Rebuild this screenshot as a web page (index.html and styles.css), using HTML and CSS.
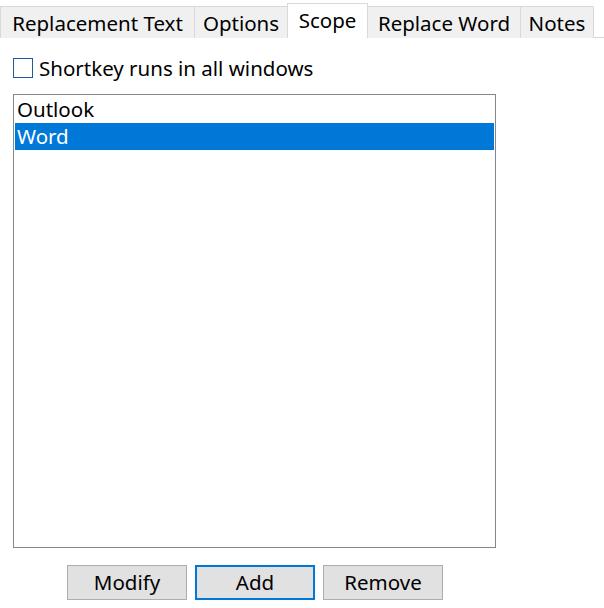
FILE: index.html
```html
<!DOCTYPE html>
<html>
<head>
<meta charset="utf-8">
<link rel="stylesheet" href="styles.css">
</head>
<body>
<div class="dialog">
  <div class="tabs">
    <div class="tab t1">Replacement Text</div>
    <div class="tab t2">Options</div>
    <div class="tab t3 active">Scope</div>
    <div class="tab t4">Replace Word</div>
    <div class="tab t5">Notes</div>
  </div>
  <div class="panel">
    <label class="check">
      <span class="box"></span>
      <span class="check-label">Shortkey runs in all windows</span>
    </label>
    <div class="list">
      <div class="item">Outlook</div>
      <div class="item selected">Word</div>
    </div>
    <div class="buttons">
      <button class="btn">Modify</button>
      <button class="btn default">Add</button>
      <button class="btn">Remove</button>
    </div>
  </div>
</div>
</body>
</html>
```

FILE: styles.css
```css
html, body {
  margin: 0;
  padding: 0;
  background: #ffffff;
}
body {
  font-family: "Noto Sans", "Open Sans", sans-serif;
  font-size: 20.5px;
  color: #000000;
  width: 604px;
  height: 608px;
  overflow: hidden;
}
.tabs {
  display: flex;
  align-items: flex-end;
  height: 38px;
  border-bottom: 1px solid #d9d9d9;
  box-sizing: border-box;
}
.tab {
  box-sizing: border-box;
  height: 32px;
  background: #f0f0f0;
  border: 1px solid #d9d9d9;
  border-bottom: none;
  border-left: none;
  display: flex;
  align-items: center;
  justify-content: center;
  line-height: 1;
  white-space: nowrap;
  margin-bottom: -1px;
  padding-top: 1px;
}
.tab.t1 { width: 195px; border-left: 1px solid #d9d9d9; }
.tab.t2 { width: 93px; }
.tab.t3 { width: 81px; }
.tab.t4 { width: 153px; }
.tab.t5 { width: 73px; }
.tab.active {
  height: 35px;
  background: #ffffff;
  border-left: 1px solid #d9d9d9;
  margin-left: -1px;
  padding-bottom: 3px;
}
.panel {
  padding: 20px 0 0 13px;
}
.check {
  display: flex;
  align-items: center;
  gap: 6px;
  height: 20px;
}
.box {
  box-sizing: border-box;
  width: 20px;
  height: 20px;
  border: 1px solid #1f5b96;
  background: #ffffff;
}
.check-label {
  line-height: 1;
}
.list {
  box-sizing: border-box;
  margin-top: 16px;
  width: 483px;
  height: 454px;
  border: 1px solid #828790;
  padding: 1px;
}
.item {
  height: 27px;
  line-height: 27px;
  padding-left: 2px;
}
.item.selected {
  background: #0078d7;
  color: #ffffff;
}
.buttons {
  display: flex;
  gap: 8px;
  margin-top: 17px;
  padding-left: 54px;
}
.btn {
  box-sizing: border-box;
  width: 120px;
  height: 35px;
  background: #e1e1e1;
  border: 1px solid #adadad;
  font-family: inherit;
  font-size: 20.5px;
  color: #000000;
  padding: 0 0 1px 0;
  margin: 0;
}
.btn.default {
  border: 2px solid #0078d7;
}
```
